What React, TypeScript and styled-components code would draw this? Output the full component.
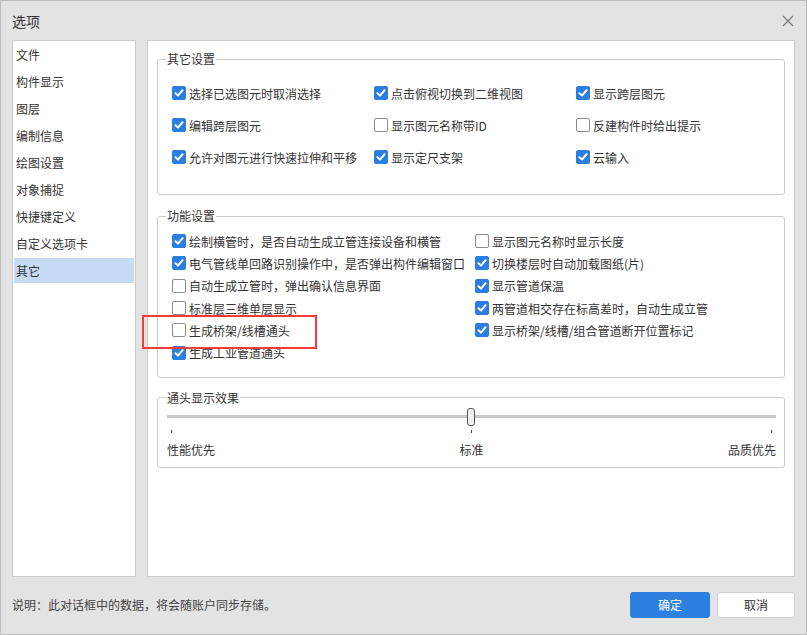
import styled, { createGlobalStyle } from 'styled-components';

const GlobalStyle = createGlobalStyle`
  html, body {
    margin: 0;
    padding: 0;
    background: #e3e3e3;
  }
  * {
    box-sizing: border-box;
  }
`;

const Window = styled.div`
  position: relative;
  width: 807px;
  height: 635px;
  border: 1px solid #bdbdbd;
  background: #e3e3e3;
  padding: 0 11px;
  display: flex;
  flex-direction: column;
  font-family: 'Noto Sans CJK SC', 'Noto Sans', sans-serif;
  color: #333;
`;

const TitleBar = styled.div`
  height: 39px;
  display: flex;
  align-items: center;
  justify-content: space-between;
  font-size: 14px;
  color: #333;
  padding-right: 1px;
`;

const CloseButton = styled.button`
  width: 12px;
  height: 12px;
  padding: 0;
  border: none;
  background: transparent;
  display: flex;
  margin-top: 1px;
`;

const Body = styled.div`
  display: flex;
  gap: 11px;
  height: 537px;
`;

const Sidebar = styled.ul`
  width: 124px;
  margin: 0;
  padding: 1px;
  list-style: none;
  background: #fff;
  border: 1px solid #c9c9c9;
`;

const NavItem = styled.li<{ $active?: boolean }>`
  height: 25px;
  margin-bottom: 2px;
  padding-left: 2px;
  display: flex;
  align-items: center;
  font-size: 12px;
  background: ${(p) => (p.$active ? '#c4dbf3' : 'transparent')};
`;

const Panel = styled.div`
  flex: 1;
  background: #fff;
  border: 1px solid #c9c9c9;
  padding: 10px 9px;
  overflow: hidden;
`;

const Group = styled.fieldset<{ $gap?: number; $pt: number; $pb: number; $pl?: number }>`
  margin: ${(p) => p.$gap ?? 0}px 0 0 0;
  min-width: 0;
  border: 1px solid #cdcdcd;
  border-radius: 3px;
  padding: ${(p) => p.$pt}px 8px ${(p) => p.$pb}px ${(p) => p.$pl ?? 14}px;
`;

const Legend = styled.legend<{ $shift?: number }>`
  font-size: 12px;
  line-height: 16px;
  padding: 0 1px;
  margin-left: ${(p) => p.$shift ?? -6}px;
  color: #333;
`;

const Grid = styled.div<{ $cols: string; $row: number }>`
  display: grid;
  grid-template-columns: ${(p) => p.$cols};
  grid-auto-rows: ${(p) => p.$row}px;
  font-size: 12px;
`;

const Option = styled.label`
  display: flex;
  align-items: center;
  gap: 3px;
  white-space: nowrap;
  color: #333;
`;

const Box = styled.span<{ $checked: boolean }>`
  width: 14px;
  height: 14px;
  flex: none;
  border-radius: 2px;
  display: flex;
  align-items: center;
  justify-content: center;
  background: ${(p) => (p.$checked ? '#2b7de0' : '#fff')};
  border: 1px solid ${(p) => (p.$checked ? '#2b7de0' : '#8c8c8c')};
`;

const SliderWrap = styled.div`
  position: relative;
  height: 22px;
  display: flex;
  align-items: center;
`;

const Track = styled.div`
  width: 100%;
  height: 3px;
  background: #c8c8c8;
`;

const Thumb = styled.div`
  position: absolute;
  left: 300px;
  top: 2px;
  width: 8px;
  height: 18px;
  border: 1px solid #555;
  border-radius: 3px;
  background: #eef0f2;
`;

const Ticks = styled.div`
  display: flex;
  justify-content: space-between;
  padding: 0 4px;
  margin-top: 2px;
  height: 3px;
`;

const Tick = styled.span`
  width: 1px;
  height: 3px;
  background: #444;
`;

const Labels = styled.div`
  display: grid;
  grid-template-columns: 1fr auto 1fr;
  margin-top: 9px;
  font-size: 12px;
  line-height: 16px;
  color: #333;
  span:last-child {
    text-align: right;
  }
`;

const Footer = styled.div`
  flex: 1;
  display: flex;
  align-items: center;
  justify-content: space-between;
  padding-bottom: 2px;
`;

const Note = styled.span`
  font-size: 12px;
  color: #444;
`;

const Buttons = styled.div`
  display: flex;
  gap: 7px;
`;

const Button = styled.button<{ $primary?: boolean }>`
  height: 26px;
  width: ${(p) => (p.$primary ? 80 : 78)}px;
  border-radius: 3px;
  font-family: inherit;
  font-size: 12px;
  cursor: pointer;
  background: ${(p) => (p.$primary ? '#2d7fe0' : '#fff')};
  color: ${(p) => (p.$primary ? '#fff' : '#333')};
  border: 1px solid ${(p) => (p.$primary ? '#2d7fe0' : '#d2d2d2')};
`;

const Highlight = styled.div`
  position: absolute;
  left: 141px;
  top: 314px;
  width: 175px;
  height: 34px;
  border: 2.5px solid #ee3b3b;
  pointer-events: none;
`;

const nav = ['文件', '构件显示', '图层', '编制信息', '绘图设置', '对象捕捉', '快捷键定义', '自定义选项卡', '其它'];

const other: [string, boolean][] = [
  ['选择已选图元时取消选择', true],
  ['点击俯视切换到二维视图', true],
  ['显示跨层图元', true],
  ['编辑跨层图元', true],
  ['显示图元名称带ID', false],
  ['反建构件时给出提示', false],
  ['允许对图元进行快速拉伸和平移', true],
  ['显示定尺支架', true],
  ['云输入', true],
];

const func: [string, boolean][] = [
  ['绘制横管时，是否自动生成立管连接设备和横管', true],
  ['显示图元名称时显示长度', false],
  ['电气管线单回路识别操作中，是否弹出构件编辑窗口', true],
  ['切换楼层时自动加载图纸(片)', true],
  ['自动生成立管时，弹出确认信息界面', false],
  ['显示管道保温', true],
  ['标准层三维单层显示', false],
  ['两管道相交存在标高差时，自动生成立管', true],
  ['生成桥架/线槽通头', false],
  ['显示桥架/线槽/组合管道断开位置标记', true],
  ['生成工业管道通头', true],
];

function Check({ label, checked }: { label: string; checked: boolean }) {
  return (
    <Option>
      <Box $checked={checked}>
        {checked && (
          <svg width="10" height="10" viewBox="0 0 10 10">
            <polyline points="1.5,5.2 4,7.6 8.6,2.2" fill="none" stroke="#fff" strokeWidth="2" strokeLinecap="round" strokeLinejoin="round" />
          </svg>
        )}
      </Box>
      {label}
    </Option>
  );
}

function App() {
  return (
    <>
      <GlobalStyle />
      <Window>
        <TitleBar>
          <span>选项</span>
          <CloseButton>
            <svg width="12" height="12" viewBox="0 0 12 12">
              <path d="M1 1 L11 11 M11 1 L1 11" stroke="#777" strokeWidth="1.2" />
            </svg>
          </CloseButton>
        </TitleBar>
        <Body>
          <Sidebar>
            {nav.map((n) => (
              <NavItem key={n} $active={n === '其它'}>
                {n}
              </NavItem>
            ))}
          </Sidebar>
          <Panel>
            <Group $pt={10} $pb={21}>
              <Legend>其它设置</Legend>
              <Grid $cols="202px 202px 1fr" $row={32}>
                {other.map(([l, c]) => (
                  <Check key={l} label={l} checked={c} />
                ))}
              </Grid>
            </Group>
            <Group $gap={13} $pt={6} $pb={13}>
              <Legend>功能设置</Legend>
              <Grid $cols="303px 1fr" $row={22.3}>
                {func.map(([l, c]) => (
                  <Check key={l} label={l} checked={c} />
                ))}
              </Grid>
            </Group>
            <Group $gap={12} $pt={0} $pb={9} $pl={9}>
              <Legend $shift={-1}>通头显示效果</Legend>
              <SliderWrap>
                <Track />
                <Thumb />
              </SliderWrap>
              <Ticks>
                <Tick />
                <Tick />
                <Tick />
              </Ticks>
              <Labels>
                <span>性能优先</span>
                <span>标准</span>
                <span>品质优先</span>
              </Labels>
            </Group>
          </Panel>
        </Body>
        <Footer>
          <Note>说明：此对话框中的数据，将会随账户同步存储。</Note>
          <Buttons>
            <Button $primary>确定</Button>
            <Button>取消</Button>
          </Buttons>
        </Footer>
        <Highlight />
      </Window>
    </>
  );
}

export default App;
